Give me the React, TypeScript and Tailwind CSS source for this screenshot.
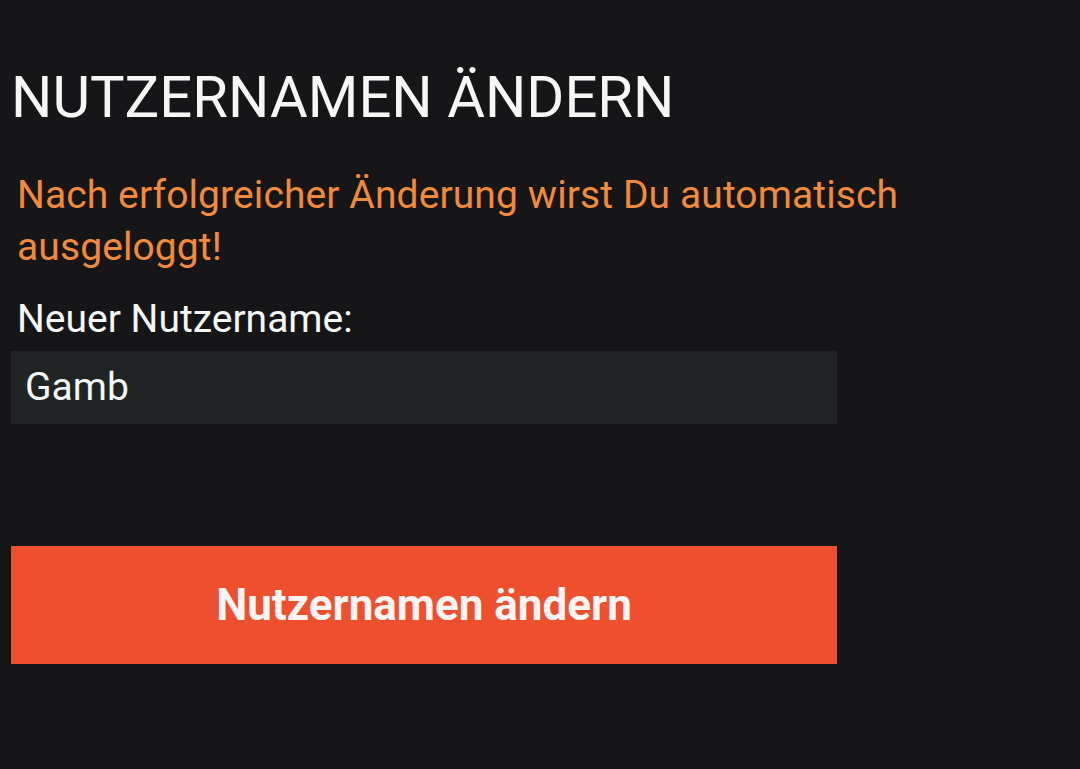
export default function App() {
  return (
    <div
      className="min-h-[769px] w-full bg-[#161618] text-[#f5f6f6]"
      style={{ fontFamily: 'Roboto, "Noto Sans", sans-serif' }}
    >
      <div className="w-[826px] ml-[11px] pt-[63px]">
        <h1 className="text-[58px] leading-[68px] font-normal">NUTZERNAMEN ÄNDERN</h1>
        <p className="mt-[38px] text-[39px] leading-[52px] text-[#f28a3b] pl-[6px] w-[920px] tracking-[0.1px]">
          Nach erfolgreicher Änderung wirst Du automatisch ausgeloggt!
        </p>
        <div className="mt-[23px] text-[39px] leading-[46px] pl-[6px]">Neuer Nutzername:</div>
        <div className="mt-[9px] h-[73px] bg-[#202425] flex items-center px-[14px] text-[39px]">Gamb</div>
        <button className="mt-[122px] h-[118px] w-full bg-[#ee4f2f] text-[44px] font-bold text-[#fbf4f2]">
          Nutzernamen ändern
        </button>
      </div>
    </div>
  )
}
